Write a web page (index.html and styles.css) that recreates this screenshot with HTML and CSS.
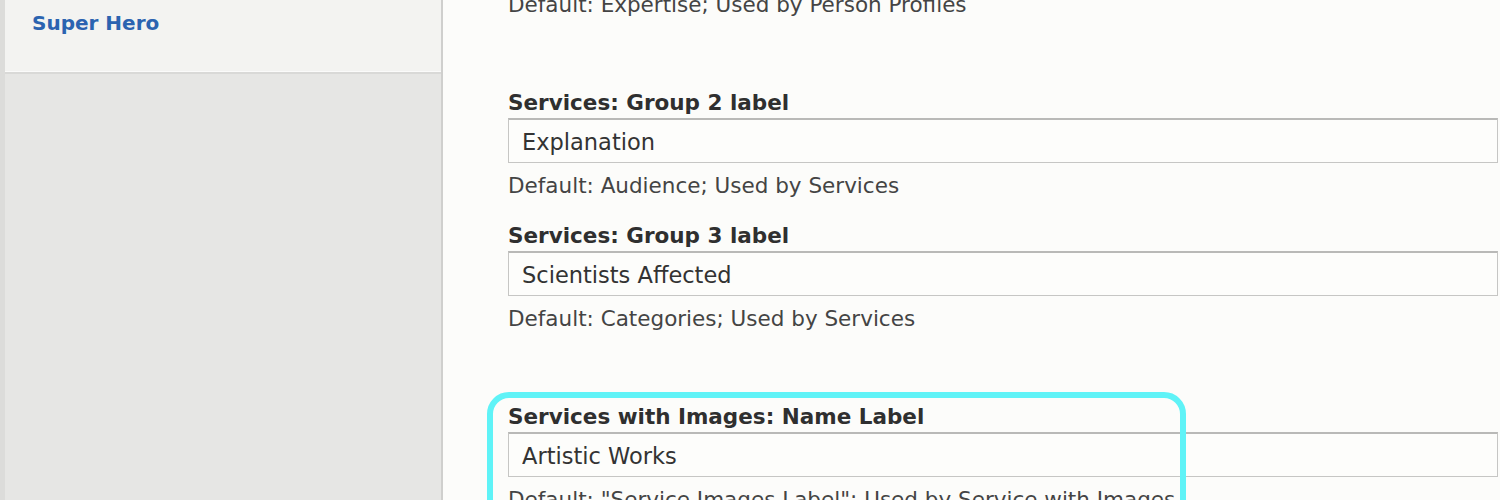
FILE: index.html
```html
<!DOCTYPE html>
<html lang="en">
<head>
<meta charset="utf-8">
<title>Settings</title>
<link rel="stylesheet" href="styles.css">
</head>
<body>
<div class="page">
  <aside class="sidebar">
    <div class="panel">
      <a class="link" href="#">Super Hero</a>
    </div>
    <div class="sidebar-rest"></div>
  </aside>
  <main class="main">
    <section class="section">
      <p class="help first">Default: Expertise; Used by Person Profiles</p>
    </section>
    <section class="section">
      <div class="field">
        <label class="label">Services: Group 2 label</label>
        <input class="input" type="text" value="Explanation" readonly>
        <p class="help">Default: Audience; Used by Services</p>
      </div>
      <div class="field">
        <label class="label">Services: Group 3 label</label>
        <input class="input" type="text" value="Scientists Affected" readonly>
        <p class="help">Default: Categories; Used by Services</p>
      </div>
    </section>
    <section class="section highlighted">
      <div class="field">
        <label class="label">Services with Images: Name Label</label>
        <input class="input" type="text" value="Artistic Works" readonly>
        <p class="help">Default: "Service Images Label"; Used by Service with Images</p>
      </div>
      <div class="highlight"></div>
    </section>
  </main>
</div>
</body>
</html>
```
FILE: styles.css
```css
html, body {
  margin: 0;
  padding: 0;
  height: 100%;
  overflow: hidden;
}
body {
  background: #fcfcfa;
  font-family: "DejaVu Sans", "Liberation Sans", sans-serif;
  color: #333;
}
.page {
  display: flex;
  height: 500px;
}
.sidebar {
  width: 436px;
  flex: 0 0 436px;
  border-left: 5px solid #dcdcda;
  border-right: 2px solid #cfcfcd;
  display: flex;
  flex-direction: column;
  background: #e6e6e4;
}
.panel {
  height: 60px;
  padding: 11px 0 0 27px;
  background: #f3f3f1;
  border-bottom: 1px solid #fbfbfa;
}
.sidebar-rest {
  flex: 1;
  border-top: 2px solid #d9d9d7;
  background: #e6e6e4;
}
.link {
  display: block;
  font-size: 20px;
  line-height: 24px;
  font-weight: bold;
  color: #2b63b0;
  text-decoration: none;
}
.main {
  flex: 1;
  padding: 0 2px 0 65px;
  position: relative;
}
.section + .section {
  margin-top: 72px;
}
.field {
  display: flex;
  flex-direction: column;
}
.field + .field {
  margin-top: 24px;
}
.label {
  font-size: 21.5px;
  line-height: 26px;
  font-weight: bold;
  color: #2f2f2f;
}
.input {
  margin-top: 2px;
  width: 100%;
  height: 45px;
  box-sizing: border-box;
  border: 1px solid #c6c6c4;
  border-top: 2px solid #b9b9b7;
  background: #fdfdfb;
  padding: 2px 0 0 13px;
  font-family: "DejaVu Sans", "Liberation Sans", sans-serif;
  font-size: 22.5px;
  color: #333;
  outline: none;
}
.help {
  margin: 10px 0 0 0;
  font-size: 21.5px;
  line-height: 26px;
  color: #444;
  white-space: nowrap;
}
.help.first {
  margin-top: -8px;
}
.highlighted {
  position: relative;
}
.highlight {
  position: absolute;
  left: -21px;
  top: -12px;
  width: 699px;
  height: 220px;
  box-sizing: border-box;
  border: 6px solid #5ff3f7;
  border-radius: 22px;
  pointer-events: none;
}
```
